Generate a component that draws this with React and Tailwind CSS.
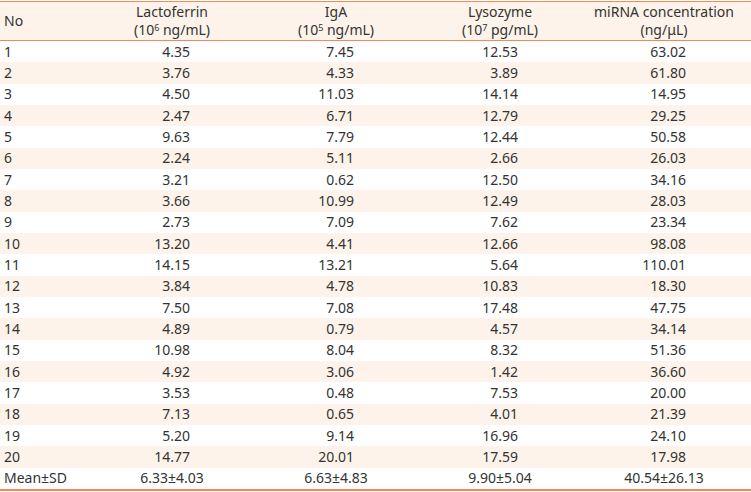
const rows = [
  ["1", "4.35", "7.45", "12.53", "63.02"],
  ["2", "3.76", "4.33", "3.89", "61.80"],
  ["3", "4.50", "11.03", "14.14", "14.95"],
  ["4", "2.47", "6.71", "12.79", "29.25"],
  ["5", "9.63", "7.79", "12.44", "50.58"],
  ["6", "2.24", "5.11", "2.66", "26.03"],
  ["7", "3.21", "0.62", "12.50", "34.16"],
  ["8", "3.66", "10.99", "12.49", "28.03"],
  ["9", "2.73", "7.09", "7.62", "23.34"],
  ["10", "13.20", "4.41", "12.66", "98.08"],
  ["11", "14.15", "13.21", "5.64", "110.01"],
  ["12", "3.84", "4.78", "10.83", "18.30"],
  ["13", "7.50", "7.08", "17.48", "47.75"],
  ["14", "4.89", "0.79", "4.57", "34.14"],
  ["15", "10.98", "8.04", "8.32", "51.36"],
  ["16", "4.92", "3.06", "1.42", "36.60"],
  ["17", "3.53", "0.48", "7.53", "20.00"],
  ["18", "7.13", "0.65", "4.01", "21.39"],
  ["19", "5.20", "9.14", "16.96", "24.10"],
  ["20", "14.77", "20.01", "17.59", "17.98"],
];

const grid = "grid grid-cols-[90px_164px_164px_164px_164px_5px]";

function Val({ children, wide }) {
  return (
    <div className="flex justify-center">
      <div className={`${wide ? "w-[44px]" : "w-[36px]"} text-right whitespace-nowrap`}>
        {children}
      </div>
    </div>
  );
}

export default function App() {
  return (
    <div
      className="w-[751px] h-[492px] bg-white text-[#333333] text-[14px] leading-[18px]"
      style={{ fontFamily: '"Noto Sans", "Open Sans", sans-serif' }}
    >
      <div className="pt-px">
        <div className="border-t-[1.5px] border-b-[1.5px] border-[#f28b55] bg-[#fdf3ea]">
          <div className={`${grid} h-[38px] items-center`}>
            <div className="pl-[4px]">No</div>
            <div className="text-center">
              <div>Lactoferrin</div>
              <div>
                (10<sup className="text-[9px]">6</sup> ng/mL)
              </div>
            </div>
            <div className="text-center">
              <div>IgA</div>
              <div>
                (10<sup className="text-[9px]">5</sup> ng/mL)
              </div>
            </div>
            <div className="text-center">
              <div>Lysozyme</div>
              <div>
                (10<sup className="text-[9px]">7</sup> pg/mL)
              </div>
            </div>
            <div className="text-center">
              <div>miRNA concentration</div>
              <div>(ng/μL)</div>
            </div>
            <div />
          </div>
        </div>
        <div className="border-b-2 border-[#f28b55]">
          {rows.map((r, i) => (
            <div
              key={r[0]}
              className={`${grid} h-[21.33px] items-center ${i % 2 === 1 ? "bg-[#fdf3ea]" : "bg-white"}`}
            >
              <div className="pl-[4px]">{r[0]}</div>
              <Val>{r[1]}</Val>
              <Val>{r[2]}</Val>
              <Val>{r[3]}</Val>
              <Val wide>{r[4]}</Val>
              <div />
            </div>
          ))}
          <div className={`${grid} h-[21.33px] items-center bg-white`}>
            <div className="pl-[4px]">Mean±SD</div>
            <div className="text-center">6.33±4.03</div>
            <div className="text-center">6.63±4.83</div>
            <div className="text-center">9.90±5.04</div>
            <div className="text-center">40.54±26.13</div>
            <div />
          </div>
        </div>
      </div>
    </div>
  );
}
